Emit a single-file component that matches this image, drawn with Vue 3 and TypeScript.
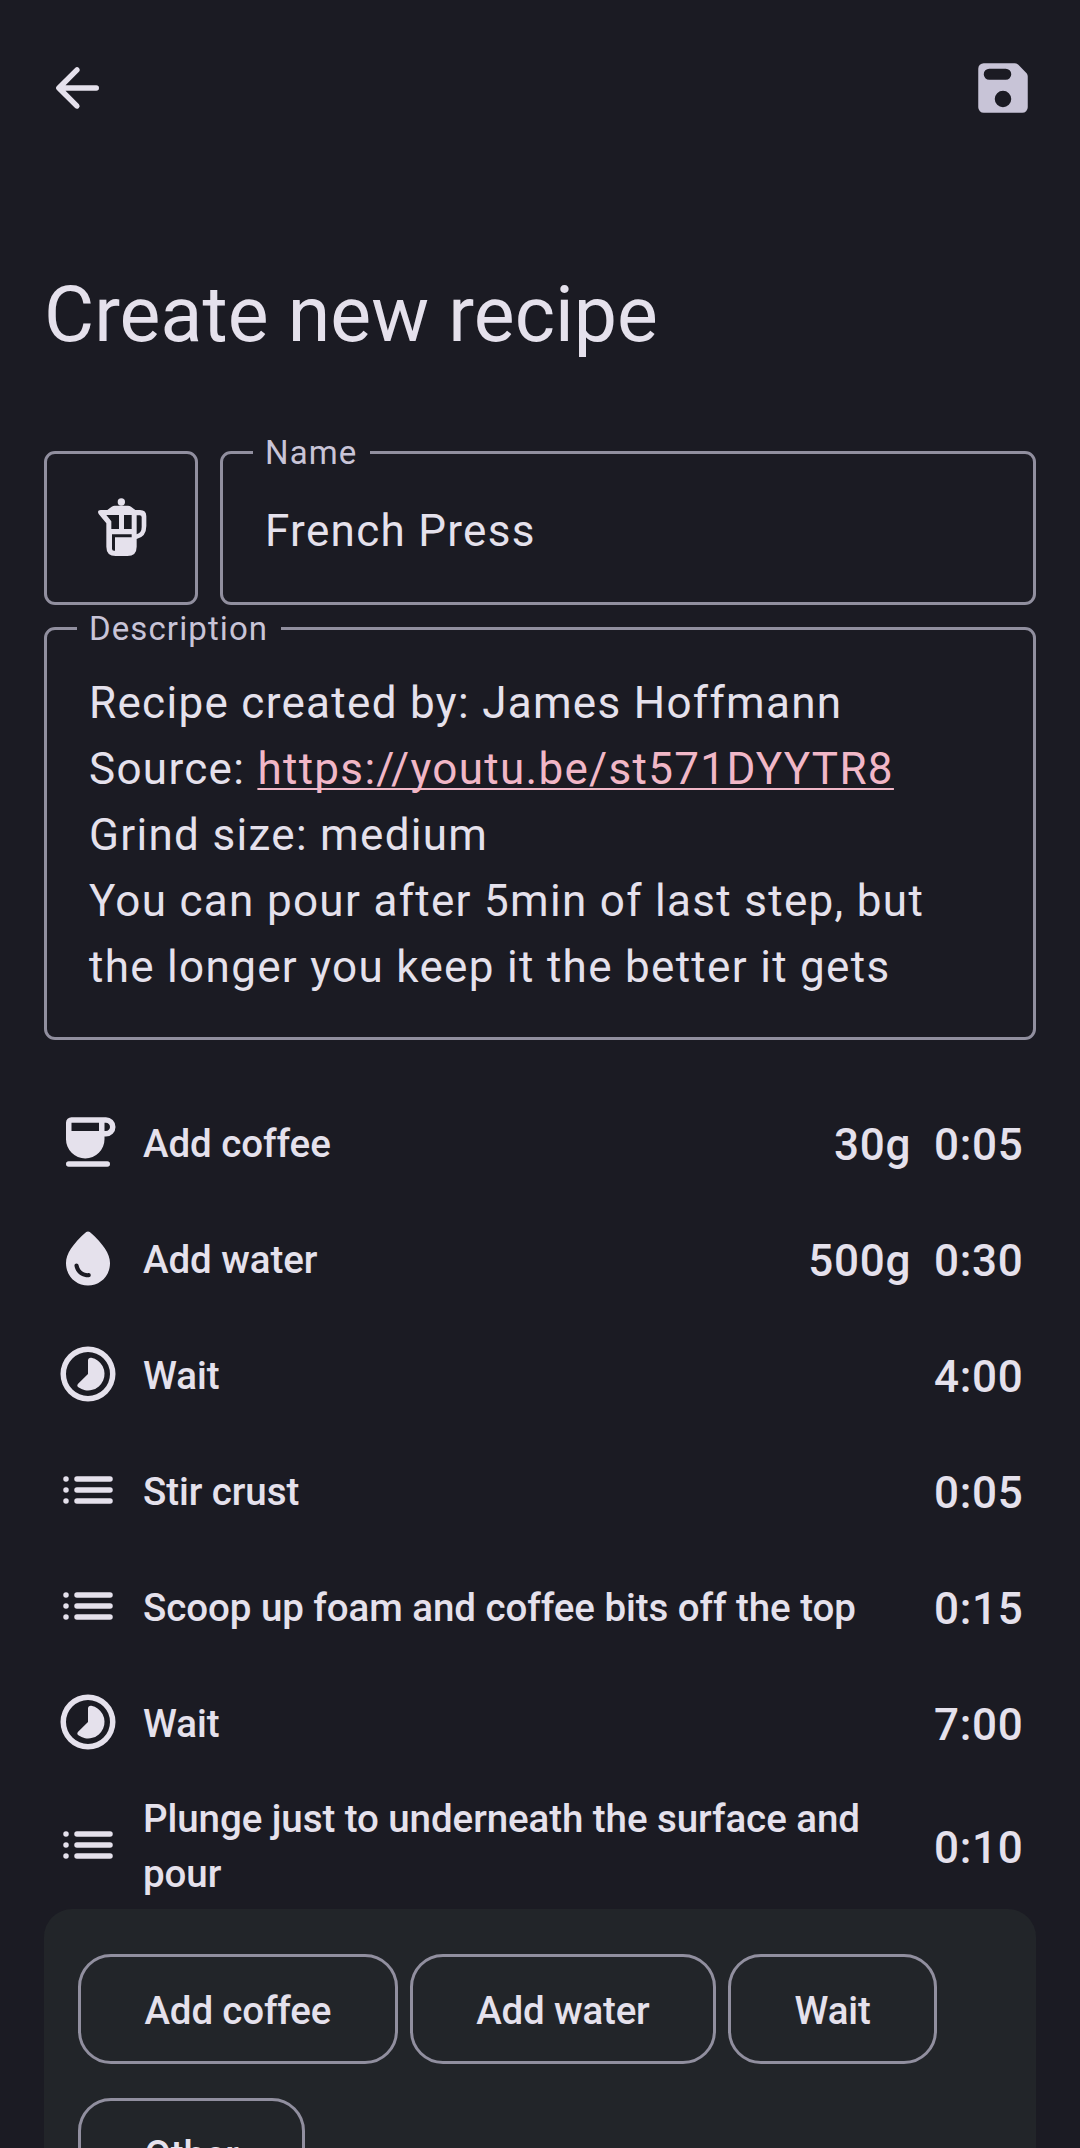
<script setup lang="ts">
import { ref } from 'vue'

type StepKind = 'coffee' | 'water' | 'wait' | 'other'

interface Step {
  kind: StepKind
  label: string
  amount?: string
  time: string
}

const name = ref('French Press')
const steps = ref<Step[]>([
  { kind: 'coffee', label: 'Add coffee', amount: '30g', time: '0:05' },
  { kind: 'water', label: 'Add water', amount: '500g', time: '0:30' },
  { kind: 'wait', label: 'Wait', time: '4:00' },
  { kind: 'other', label: 'Stir crust', time: '0:05' },
  { kind: 'other', label: 'Scoop up foam and coffee bits off the top', time: '0:15' },
  { kind: 'wait', label: 'Wait', time: '7:00' },
  { kind: 'other', label: 'Plunge just to underneath the surface and pour', time: '0:10' },
])
const stepTypes = ['Add coffee', 'Add water', 'Wait', 'Other']

const paths: Record<StepKind, string> = {
  coffee:
    'M4 5a2 2 0 0 1 2-2h12.5a3.5 3.5 0 0 1 0 7H18v1a7 7 0 0 1-14 0zM6 5v3h10V5zM18 5v3h.5a1.5 1.5 0 0 0 0-3zM5 19h14a1 1 0 0 1 0 2H5a1 1 0 0 1 0-2z',
  water:
    'M12.66 2.58c-.37-.33-.95-.33-1.32 0C6.45 6.88 4 10.62 4 13.8c0 4.98 3.8 8.2 8 8.2s8-3.22 8-8.2c0-3.18-2.45-6.92-7.34-11.22zM7.83 14c.37 0 .67.26.74.62.41 2.22 2.28 2.98 3.64 2.87.43-.02.79.32.79.75 0 .4-.32.73-.72.75-2.13.13-4.62-1.09-5.19-4.12-.08-.45.28-.87.74-.87z',
  wait:
    'M12 2a10 10 0 1 0 0 20 10 10 0 0 0 0-20zm0 18a8 8 0 1 1 0-16 8 8 0 0 1 0 16zM12 7.1c0-.7.5-1.1 1.2-1A6 6 0 1 1 8.5 16.85c-.5-.4-.5-.95-.1-1.35L12 12z',
  other:
    'M4 7a1 1 0 0 1 0 2 1 1 0 0 1 0-2zM4 11a1 1 0 0 1 0 2 1 1 0 0 1 0-2zM4 15a1 1 0 0 1 0 2 1 1 0 0 1 0-2zM8 7h12a1 1 0 0 1 0 2H8a1 1 0 0 1 0-2zM8 11h12a1 1 0 0 1 0 2H8a1 1 0 0 1 0-2zM8 15h12a1 1 0 0 1 0 2H8a1 1 0 0 1 0-2z',
}
</script>

<template>
  <main class="screen">
    <header class="bar">
      <svg class="icon" viewBox="0 0 24 24">
        <path
          d="M19 11H7.83l4.88-4.88c.39-.39.39-1.03 0-1.42a1 1 0 0 0-1.41 0l-6.59 6.59a1 1 0 0 0 0 1.41l6.59 6.59a1 1 0 0 0 1.41-1.41L7.83 13H19a1 1 0 0 0 0-2z"
        />
      </svg>
      <svg class="icon save" viewBox="0 0 24 24">
        <path
          d="M17.59 3.59c-.38-.38-.89-.59-1.42-.59H5a2 2 0 0 0-2 2v14a2 2 0 0 0 2 2h14a2 2 0 0 0 2-2V7.83c0-.53-.21-1.04-.59-1.41zM12 19a3 3 0 1 1 0-6 3 3 0 0 1 0 6zm1-10H7a2 2 0 0 1 0-4h6a2 2 0 0 1 0 4z"
        />
      </svg>
    </header>

    <h1 class="title">Create new recipe</h1>

    <div class="row">
      <div class="field picker">
        <svg class="icon" viewBox="0 0 198 198">
          <circle cx="100" cy="21" r="11" />
          <path
            fill-rule="evenodd"
            d="M58 45L71 35q5-3 9-3h40q5 0 9 3l13 10h14q19 0 19 19v29q0 32-29 39v23q0 28-28 28H83q-28 0-28-28V85L32 57q-6-12 6-12zM55 60l15 19v23h23V60zM108 60v42h23V60zM72 118v43q0 6 6 6h3v-40h50v-9zM146 61v57q15-4 15-22V67q0-6-6-6z"
          />
        </svg>
      </div>
      <div class="field name">
        <span class="label">Name</span>
        <div class="value">{{ name }}</div>
      </div>
    </div>

    <div class="field description">
      <span class="label">Description</span>
      <div class="value">
        Recipe created by: James Hoffmann<br />
        Source: <a class="link">https://youtu.be/st571DYYTR8</a><br />
        Grind size: medium<br />
        You can pour after 5min of last step, but the longer you keep it the better it gets
      </div>
    </div>

    <ul class="steps">
      <li v-for="(step, i) in steps" :key="i" class="step">
        <svg class="icon" viewBox="0 0 24 24">
          <path fill-rule="evenodd" :d="paths[step.kind]" />
        </svg>
        <span class="step-label">{{ step.label }}</span>
        <span class="figures">
          <span v-if="step.amount">{{ step.amount }}</span>
          <span>{{ step.time }}</span>
        </span>
      </li>
    </ul>

    <section class="panel">
      <button v-for="type in stepTypes" :key="type" class="chip" type="button">{{ type }}</button>
    </section>
  </main>
</template>

<style>
body {
  margin: 0;
  background: #1b1b23;
}
</style>

<style scoped>
.screen {
  box-sizing: border-box;
  width: 1080px;
  height: 2148px;
  padding: 55px 44px 0;
  overflow: hidden;
  background: #1b1b23;
  color: #e5e1ec;
  font-family: Roboto, sans-serif;
}

.bar {
  display: flex;
  justify-content: space-between;
  height: 66px;
}

.icon {
  display: block;
  flex: none;
  width: 66px;
  height: 66px;
  fill: currentColor;
}

.save {
  color: #c8c4d7;
}

.title {
  margin: 145px 0 86px;
  font-size: 77px;
  font-weight: 400;
  line-height: 99px;
  letter-spacing: 0.06px;
}

.row {
  display: flex;
  gap: 22px;
  margin-bottom: 22px;
}

.field {
  position: relative;
  box-sizing: border-box;
  border: 3px solid #918f9f;
  border-radius: 11px;
}

.picker {
  display: flex;
  align-items: center;
  justify-content: center;
  width: 154px;
  height: 154px;
}

.name {
  flex: 1;
  padding: 44px 41px 0 42px;
}

.description {
  height: 413px;
  padding: 40px 41px 0 42px;
}

.label {
  position: absolute;
  top: -23px;
  left: 30px;
  padding: 0 13px 0 12px;
  background: #1b1b23;
  color: #c8c4d7;
  font-size: 33px;
  line-height: 44px;
  letter-spacing: 1.1px;
}

.value {
  font-size: 44px;
  line-height: 66px;
  letter-spacing: 1.31px;
}

.link {
  color: #f1b7c7;
  text-decoration: underline;
  text-decoration-thickness: 2px;
  text-decoration-skip-ink: none;
  text-underline-offset: 4px;
}

.steps {
  margin: 44px 0 0;
  padding: 0;
  list-style: none;
}

.step {
  box-sizing: border-box;
  display: flex;
  align-items: center;
  gap: 22px;
  min-height: 116px;
  padding: 10px 12.5px 10px 11px;
}

.step-label {
  flex: 1;
  padding-top: 1px;
  margin-bottom: -1px;
  font-size: 38.5px;
  font-weight: 500;
  line-height: 55px;
  letter-spacing: -0.07px;
}

.figures {
  display: flex;
  gap: 23px;
  padding-top: 5px;
  font-size: 44px;
  font-weight: 500;
  line-height: 66px;
  letter-spacing: 0.7px;
}

.panel {
  box-sizing: border-box;
  display: flex;
  flex-wrap: wrap;
  align-content: flex-start;
  gap: 34px 12px;
  height: 300px;
  margin-top: -1px;
  padding: 45px 34px;
  border-radius: 28px 28px 0 0;
  background: #222529;
}

.chip {
  box-sizing: border-box;
  height: 110px;
  padding: 2px 63.5px 0;
  border: 3px solid #918f9f;
  border-radius: 33px;
  background: none;
  color: inherit;
  font-family: inherit;
  font-size: 38.5px;
  font-weight: 500;
  line-height: 55px;
  letter-spacing: -0.17px;
}
</style>
